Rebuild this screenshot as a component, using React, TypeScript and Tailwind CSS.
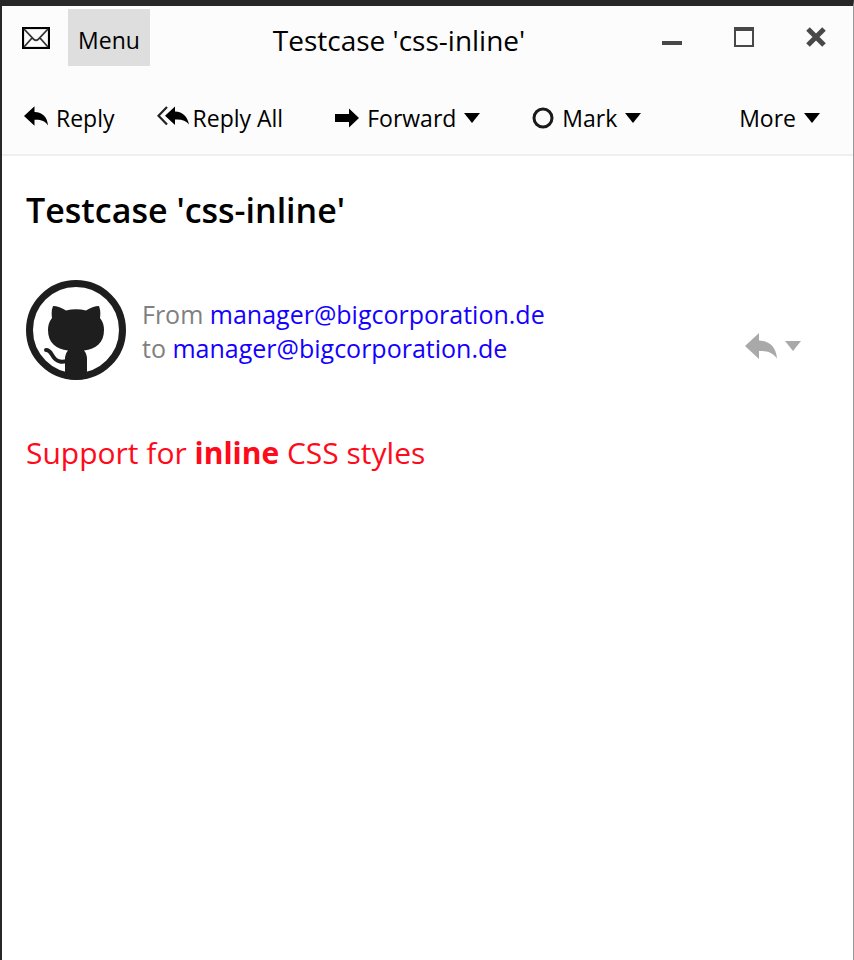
import type { ReactNode } from "react";

function ReplyArrow({ className }: { className: string }) {
  return (
    <svg viewBox="0 0 32 26" className={className} fill="currentColor" aria-hidden="true">
      <path d="M0 13 14 0v7.500C25 8 31 14 32 25.500C28 19.500 22 17.500 14 18v8Z" />
    </svg>
  );
}

function ReplyAllArrow() {
  return (
    <svg viewBox="0 0 32 20" className="mb-1 h-5 w-8" aria-hidden="true">
      <path d="M10 1 1.500 9.700 10 18.500" fill="none" stroke="#222" strokeWidth="2.200" />
      <path d="M8 9.700 18 .5v5c8 .5 12.500 5 14 13-3-4-7.500-5.500-14-5v5.500Z" fill="#000" />
    </svg>
  );
}

function ForwardArrow() {
  return (
    <svg viewBox="0 0 24 20" className="h-5 w-6" aria-hidden="true">
      <path d="M0 6h14V.5L24 10l-10 9.500V14H0Z" />
    </svg>
  );
}

function Caret() {
  return (
    <svg viewBox="0 0 16 10" className="h-[10px] w-4" fill="currentColor" aria-hidden="true">
      <path d="M0 0h16L8 10Z" />
    </svg>
  );
}

function ToolButton({ children, className }: { children: ReactNode; className: string }) {
  return (
    <button type="button" className={`flex items-center whitespace-nowrap ${className}`}>
      {children}
    </button>
  );
}

function Avatar() {
  return (
    <svg viewBox="0 0 100 100" className="size-[100px] shrink-0" role="img" aria-label="Sender">
      <circle cx="50" cy="50" r="46.500" fill="#fff" stroke="#1e1e1e" strokeWidth="7" />
      <path
        fill="#1e1e1e"
        d="M27 26C31 26 36 28 40 30.500Q50 28 60 30.500C64 28 69 26 73 26Q75 31 74 38Q78 43 78 50C78 63 70 69 58 70.500Q61 74 61 79V92L63 98Q50 101.500 38 98L39 92V79Q39 74 42 70.500C30 69 22 63 22 50Q22 43 26 38Q25 31 27 26Z"
      />
      <path
        d="M20 70C27 70 25 80 34 81.500Q37 82 41 81"
        fill="none"
        stroke="#1e1e1e"
        strokeWidth="4"
        strokeLinecap="round"
      />
    </svg>
  );
}

function TitleBar() {
  return (
    <div className="flex items-center pr-px">
      <svg viewBox="0 0 28 22" className="ml-5 h-[22px] w-7 shrink-0" fill="none" aria-hidden="true">
        <rect x="1" y="1" width="26" height="20" stroke="#000" strokeWidth="2.200" />
        <path d="M2 2 12 12.500Q14 14 16 12.500L26 2M2 20 10 11M26 20 18 11" stroke="#333" strokeWidth="1.800" />
      </svg>
      <button type="button" className="ml-[18px] h-[57px] w-[82px] shrink-0 bg-[#dedede] pt-1">
        Menu
      </button>
      <span className="ml-3 flex-1 pt-1 text-center text-[28px] leading-9 whitespace-nowrap">
        Testcase 'css-inline'
      </span>
      <div className="flex h-[57px] shrink-0 pb-0.5 text-[#484848]">
        <button type="button" aria-label="Minimize" className="grid w-[72px] place-items-center">
          <svg viewBox="0 0 20 20" className="size-5" fill="currentColor" aria-hidden="true">
            <path d="M0 14h20v4H0Z" />
          </svg>
        </button>
        <button type="button" aria-label="Maximize" className="grid w-[72px] place-items-center">
          <svg viewBox="0 0 20 20" className="size-5" fill="none" stroke="currentColor" aria-hidden="true">
            <path d="M1 2v17h18V2" strokeWidth="2" />
            <path d="M0 2h20" strokeWidth="4" />
          </svg>
        </button>
        <button type="button" aria-label="Close" className="grid w-[72px] place-items-center">
          <svg viewBox="0 0 20 20" className="size-5" stroke="currentColor" strokeWidth="5" aria-hidden="true">
            <path d="m2 2 16 16M18 2 2 18" />
          </svg>
        </button>
      </div>
    </div>
  );
}

function Toolbar() {
  return (
    <div className="flex items-center pt-9 pr-[33px] pb-5 pl-[22px]">
      <ToolButton className="gap-2">
        <ReplyArrow className="mb-1 h-5 w-6" />
        Reply
      </ToolButton>
      <ToolButton className="ml-[42px] gap-1">
        <ReplyAllArrow />
        Reply All
      </ToolButton>
      <ToolButton className="ml-[52px] gap-2">
        <ForwardArrow />
        Forward
        <Caret />
      </ToolButton>
      <ToolButton className="ml-[52px] gap-2">
        <svg viewBox="0 0 22 22" className="size-[22px]" fill="none" aria-hidden="true">
          <circle cx="11" cy="11" r="9" stroke="#1a1a1a" strokeWidth="3" />
        </svg>
        Mark
        <Caret />
      </ToolButton>
      <ToolButton className="ml-auto gap-2">
        More
        <Caret />
      </ToolButton>
    </div>
  );
}

export default function App() {
  return (
    <div className="flex min-h-screen flex-col border-t-[6px] border-r border-l-2 border-t-[#272727] border-r-[#999] border-l-[#272727] bg-white font-['Open_Sans','Noto_Sans',sans-serif] text-[23px] leading-8 text-black">
      <header className="border-b-2 border-[#efefef] bg-[#fcfcfc] pt-[3px]">
        <TitleBar />
        <Toolbar />
      </header>
      <main className="px-6 pt-8">
        <h1 className="text-[34px] leading-11 font-semibold">Testcase 'css-inline'</h1>
        <div className="mt-12 flex items-center">
          <Avatar />
          <div className="ml-4 flex-1 pt-0.5 text-[25px] leading-[34px] text-[#808080]">
            <p>
              From{" "}
              <a href="mailto:manager@bigcorporation.de" className="text-[#1400ff]">
                manager@bigcorporation.de
              </a>
            </p>
            <p>
              to{" "}
              <a href="mailto:manager@bigcorporation.de" className="text-[#1400ff]">
                manager@bigcorporation.de
              </a>
            </p>
          </div>
          <button
            type="button"
            aria-label="Reply options"
            className="mt-8 mr-7 flex items-center gap-2 text-[#a9a9a9]"
          >
            <ReplyArrow className="h-[26px] w-8" />
            <Caret />
          </button>
        </div>
        <p className="mt-12 text-[30px] leading-[50px] text-[#ff0a1a]">
          Support for <strong className="font-bold">inline</strong> CSS styles
        </p>
      </main>
    </div>
  );
}
